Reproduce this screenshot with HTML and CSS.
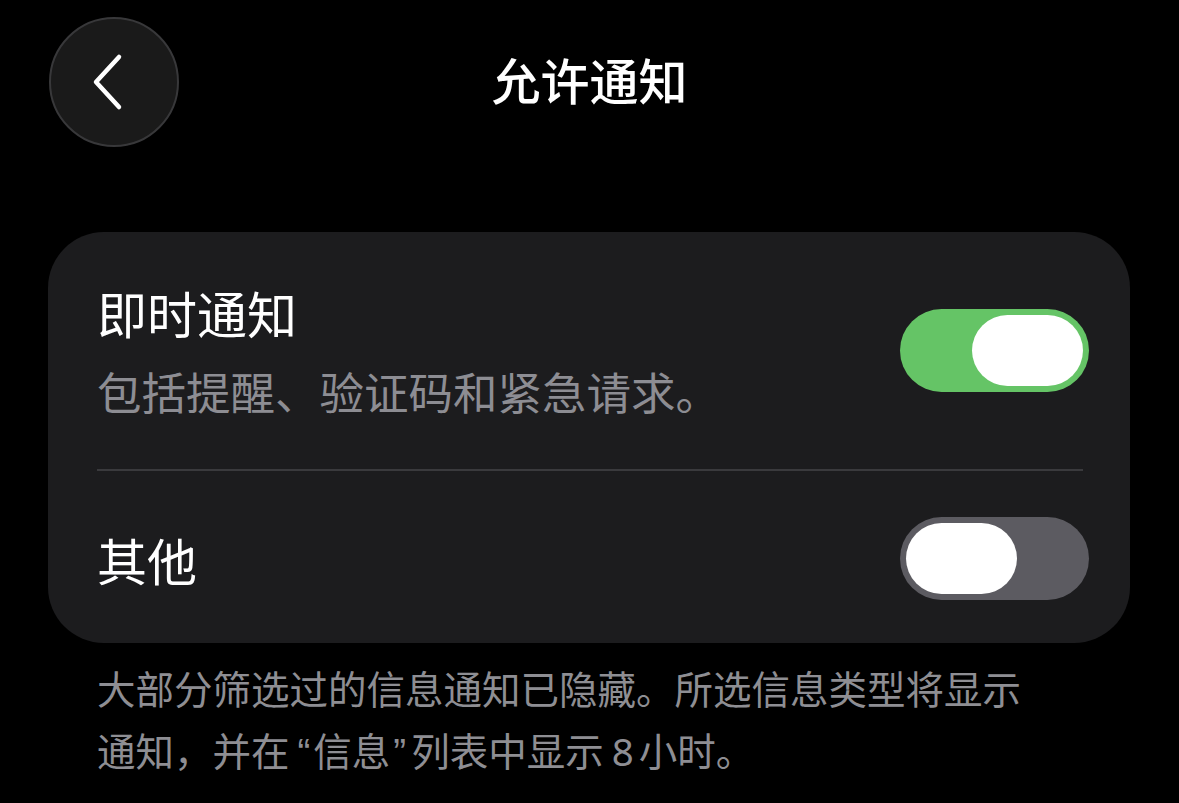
FILE: index.html
```html
<!DOCTYPE html>
<html lang="zh-CN">
<head>
    <meta charset="UTF-8">
    <meta name="viewport" content="width=device-width, initial-scale=1.0">
    <title>允许通知</title>
    <link rel="stylesheet" href="styles.css">
</head>
<body>

<!-- Top bar -->
<header class="topbar">
    <div class="topbar-left">
        <button class="back-btn" aria-label="返回">
            <svg width="60" height="60" viewBox="0 0 60 60">
                <path d="M39 5 L16 30 L39 55" fill="none" stroke="#ffffff" stroke-width="4.5" stroke-linecap="round" stroke-linejoin="round"/>
            </svg>
        </button>
    </div>
    <h1 class="title">允许通知</h1>
    <div class="topbar-right"></div>
</header>

<!-- Settings card -->
<section class="card">
    <div class="row row-first">
        <div class="row-text">
            <div class="row-title">即时通知</div>
            <div class="row-sub">包括提醒、验证码和紧急请求。</div>
        </div>
        <div class="switch on"><span class="knob"></span></div>
    </div>
    <div class="divider"></div>
    <div class="row row-second">
        <div class="row-text">
            <div class="row-title">其他</div>
        </div>
        <div class="switch"><span class="knob"></span></div>
    </div>
</section>

<p class="footnote">大部分筛选过的信息通知已隐藏。所选信息类型将显示<br>通知，并在<span class="quote open">“</span>信息<span class="quote close">”</span>列表中显示<span class="num">8</span>小时。</p>

</body>
</html>
```

FILE: styles.css
```css
/* Basic reset */
body {
    margin: 0;
    background-color: #000000;
    color: #ffffff;
    font-family: "Noto Sans CJK SC", "Noto Sans", sans-serif;
}

/* Top bar */
.topbar {
    display: grid;
    grid-template-columns: 1fr auto 1fr;
    align-items: center;
    padding: 17px 0 0 49px;
    height: 130px;
}

.back-btn {
    width: 130px;
    height: 130px;
    border-radius: 50%;
    background-color: #1a1a1a;
    border: 2px solid #38383a;
    display: flex;
    align-items: center;
    justify-content: center;
    padding: 0;
    box-sizing: border-box;
}

.back-btn svg {
    margin-left: -8px;
}

.title {
    margin: -6px 0 0 -49px;
    font-size: 49px;
    font-weight: 500;
    line-height: 60px;
}

/* Card */
.card {
    background-color: #1c1c1e;
    border-radius: 56px;
    margin: 85px 49px 0 48px;
}

.row {
    display: flex;
    align-items: center;
    justify-content: space-between;
    padding: 0 41px 0 49px;
}

.row-first {
    padding-top: 50px;
    padding-bottom: 50px;
}

.row-second {
    padding-top: 46px;
    padding-bottom: 43px;
}

.row-title {
    font-size: 50px;
    line-height: 60px;
}

.row-sub {
    font-size: 44.5px;
    line-height: 56px;
    color: #8d8d93;
    margin-top: 21px;
}

.divider {
    height: 2px;
    background-color: #3a3a3d;
    margin: 0 47px 0 49px;
}

/* Switch */
.switch {
    width: 189px;
    height: 83px;
    border-radius: 42px;
    background-color: #5c5b61;
    box-sizing: border-box;
    padding: 6px;
    display: flex;
    align-items: center;
    justify-content: flex-start;
}

.switch.on {
    background-color: #65c466;
    justify-content: flex-end;
}

.knob {
    width: 111px;
    height: 71px;
    border-radius: 36px;
    background-color: #ffffff;
}

/* Footnote */
.footnote {
    margin: 13px 0 0 97px;
    font-size: 38.5px;
    line-height: 62px;
    color: #8e8e93;
}

.quote {
    display: inline-block;
    font-family: "Liberation Sans", sans-serif;
}

.quote.open {
    margin: 0 3px 0 8px;
}

.quote.close {
    margin: 0 5px 0 3px;
}

.num {
    display: inline-block;
    font-family: "Noto Sans", sans-serif;
    margin: 0 5px 0 8px;
}
```
